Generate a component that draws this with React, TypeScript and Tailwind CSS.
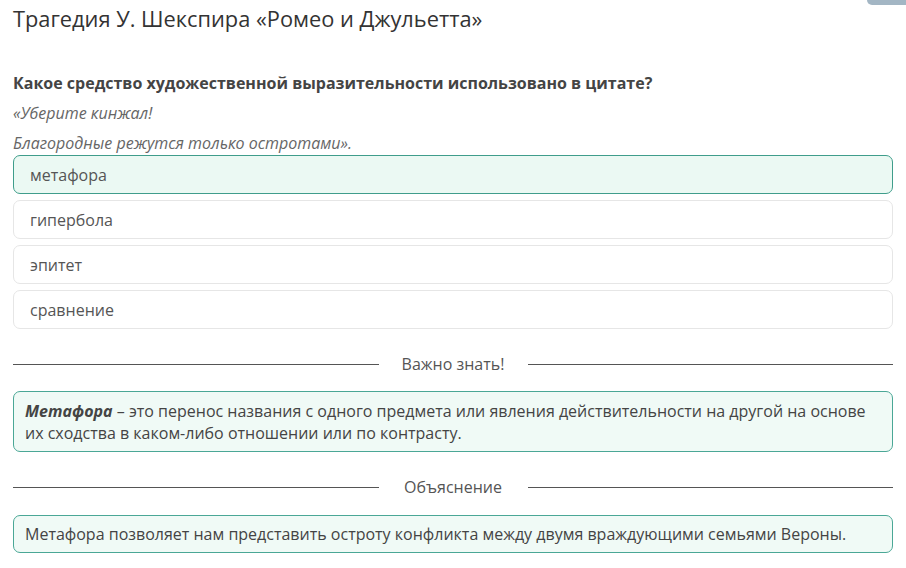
import React from 'react';

const options = ['метафора', 'гипербола', 'эпитет', 'сравнение'];

const Divider: React.FC<{ label: string }> = ({ label }) => (
  <div className="flex items-center h-[24px]">
    <div className="flex-1 h-px bg-[#555]"></div>
    <span className="w-[149px] text-center text-[16px] text-[#555]">{label}</span>
    <div className="flex-1 h-px bg-[#555]"></div>
  </div>
);

const App: React.FC = () => {
  return (
    <div className="relative min-h-[568px] bg-white px-[13px] pt-[4px] text-[#444]" style={{ fontFamily: '"Open Sans", sans-serif' }}>
      <div className="absolute top-0 right-0 w-[39px] h-[5px] bg-[#a3b6c4] rounded-bl-[6px]"></div>
      <h1 className="text-[21.8px] leading-[30px] text-[#333]">Трагедия У. Шекспира «Ромео и Джульетта»</h1>

      <p className="mt-[37px] text-[16px] leading-[24px] font-bold text-[#444]">
        Какое средство художественной выразительности использовано в цитате?
      </p>
      <p className="mt-[6px] text-[16px] leading-[24px] italic text-[#666]">«Уберите кинжал!</p>
      <p className="mt-[6px] text-[16px] leading-[24px] italic text-[#666]">Благородные режутся только остротами».</p>

      <div className="flex flex-col gap-[6px]">
        {options.map((o, i) => (
          <div
            key={o}
            className={
              i === 0
                ? 'h-[39px] flex items-center px-[16px] rounded-[7px] border border-[#3f9d8b] bg-[#ebf9f3] text-[16px] text-[#555]'
                : 'h-[39px] flex items-center px-[16px] rounded-[7px] border border-[#e6e6e6] bg-white text-[16px] text-[#555]'
            }
          >
            {o}
          </div>
        ))}
      </div>

      <div className="mt-[23px]">
        <Divider label="Важно знать!" />
      </div>

      <div className="mt-[15px] rounded-[7px] border border-[#4aa796] bg-[#f0faf6] pl-[11px] pr-[11px] pt-[8px] pb-[7px] text-[16px] leading-[22px] text-[#444]">
        <b className="italic">Метафора</b> – это перенос названия с одного предмета или явления действительности на другой на основе их сходства в каком-либо отношении или по контрасту.
      </div>

      <div className="mt-[23px]">
        <Divider label="Объяснение" />
      </div>

      <div className="mt-[16px] h-[38px] flex items-center rounded-[7px] border border-[#4aa796] bg-[#f0faf6] px-[11px] text-[16px] text-[#444]">
        Метафора позволяет нам представить остроту конфликта между двумя враждующими семьями Вероны.
      </div>
    </div>
  );
};

export default App;
